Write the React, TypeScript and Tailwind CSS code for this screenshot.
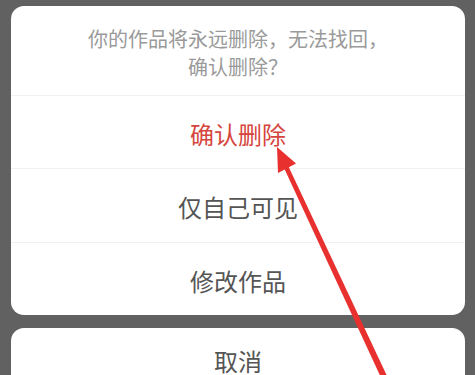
import React from "react";

export default function App() {
  const font = { fontFamily: '"Noto Sans CJK SC", "Noto Sans", sans-serif' };
  return (
    <div
      className="relative w-[475px] h-[375px] overflow-hidden bg-[#616161] pt-[6px] pl-[11px] pr-[10px]"
      style={font}
    >
      <div className="bg-white rounded-[13px] overflow-hidden">
        <div className="h-[89px] pt-[19px] flex flex-col items-center text-[20px] leading-[28px] text-[#9a9a9a]">
          <div>你的作品将永远删除，无法找回，</div>
          <div>确认删除？</div>
        </div>
        <div className="h-[73px] border-t border-[#f1f1f1] flex items-center justify-center pt-[3px] text-[24px] text-[#d5443d]">
          确认删除
        </div>
        <div className="h-[74px] border-t border-[#f1f1f1] flex items-center justify-center pt-[3px] text-[24px] text-[#555555]">
          仅自己可见
        </div>
        <div className="h-[73px] border-t border-[#f1f1f1] flex items-center justify-center pt-[3px] text-[24px] text-[#555555]">
          修改作品
        </div>
      </div>
      <div className="mt-[13px] bg-white rounded-t-[13px] h-[80px] flex justify-center pt-[21px] text-[24px] leading-[24px] text-[#555555]">
        取消
      </div>
      <svg
        className="absolute left-0 top-0 pointer-events-none"
        width="475"
        height="375"
        viewBox="0 0 475 375"
      >
        <polygon points="277,147 296,163.5 278,173" fill="#e8302e" />
        <polygon
          points="288.5,166.5 284.5,169 381.3,378.3 386.9,375.7"
          fill="#e8302e"
        />
      </svg>
    </div>
  );
}
